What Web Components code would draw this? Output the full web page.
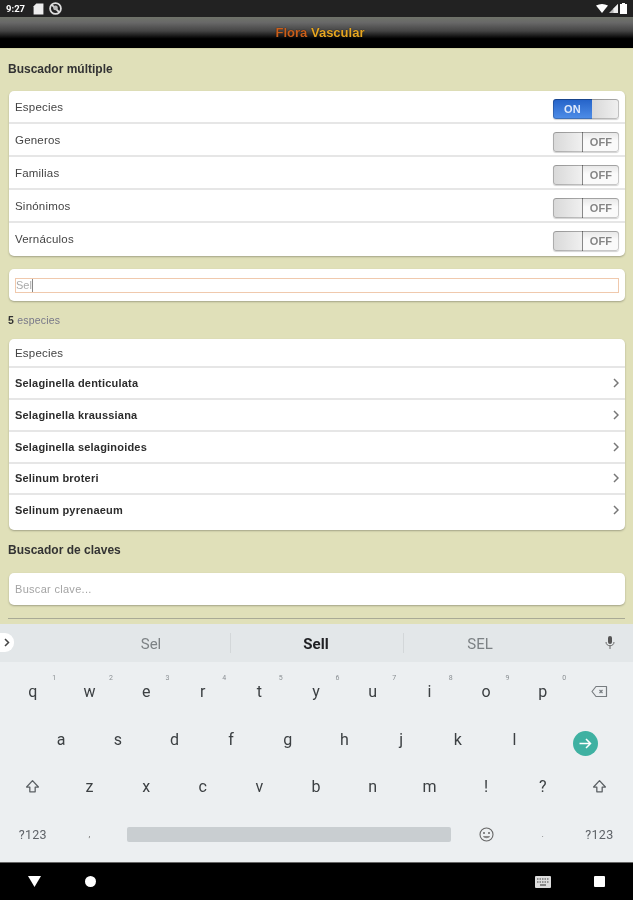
<!DOCTYPE html>
<html lang="es"><head><meta charset="utf-8"><title>Flora Vascular</title>
<style>
html,body{margin:0;padding:0;background:#e0e0b9}
body{width:633px;height:900px;overflow:hidden;font-family:"Liberation Sans",Arial,sans-serif}
</style></head><body>
<fv-app></fv-app>
<script>
function def(name,css,html){
  customElements.define(name,class extends HTMLElement{
    connectedCallback(){
      if(this.shadowRoot)return;
      const r=this.attachShadow({mode:'open'});
      r.innerHTML='<style>'+css+'</style>'+(typeof html==='function'?html(this):html);
    }
  });
}
def('fv-status',`:host{display:flex;align-items:center;height:17px;background:#222;color:#fff;padding:0 6px;box-sizing:border-box;font:bold 9.5px "Roboto",sans-serif}
 .t{width:27px}.sp{flex:1}svg{display:block}`,
 `<span class="t">9:27</span>
 <svg width="11" height="12" viewBox="0 0 10 11" style="margin-right:5px"><path d="M3 .5h6.500v10H.5V3z" fill="#eee"/></svg>
 <svg width="13" height="13" viewBox="0 0 11 11"><circle cx="5.500" cy="5.500" r="4.600" fill="none" stroke="#ddd" stroke-width="1.500"/><path d="M2 2l7 7" stroke="#ddd" stroke-width="1.500"/><circle cx="5.500" cy="5" r="2" fill="#bbb"/></svg>
 <span class="sp"></span>
 <svg width="12" height="9" viewBox="0 0 12 9" style="margin-right:1px"><path d="M0 1.500Q6-1.500 12 1.500L6 9z" fill="#fff"/></svg>
 <svg width="9" height="9" viewBox="0 0 9 9" style="margin-right:2px"><path d="M9 0v9H0z" fill="#bbb"/><path d="M9 0v9H4.500V4.500z" fill="#eee"/></svg>
 <svg width="7" height="11" viewBox="0 0 7 11"><path d="M2 0h3v1h2v10H0V1h2z" fill="#fff"/></svg>`);
def('fv-header',`:host{display:flex;align-items:center;justify-content:center;height:31px;box-sizing:border-box;padding:0 0 1px 7px;background:linear-gradient(#70746a 0,#686868 18%,#444 45%,#000 70%,#000 100%);font:bold 13px "Liberation Sans",sans-serif;text-shadow:0 0 1px #000}
 .a{color:#c95f1c}.b{color:#e6a622}`,`<span><span class="a">Flora</span> <span class="b">Vascular</span></span>`);
def('fv-title',`:host{display:block;font:bold 12px/14px "Liberation Sans",sans-serif;color:#333;padding:0 8px}`,`<slot></slot>`);
def('fv-card',`:host{display:block;margin:0 8px 0 9px;background:#fff;border-radius:5px;box-shadow:0 1px 2px rgba(0,0,0,.28);overflow:hidden}`,`<slot></slot>`);
def('fv-row',`:host{display:flex;align-items:center;justify-content:space-between;box-sizing:border-box;padding:0 6px;height:var(--h,33px);border-bottom:2px solid #e6e6e6;font:11.500px "Liberation Sans",sans-serif;color:#444;letter-spacing:.2px}
 :host([last]){border-bottom:0;padding-bottom:2px}
 :host([bold]){font:bold 11px "Liberation Sans",sans-serif;color:#2c2c2c;letter-spacing:.2px}
 .c{display:block}`,
 e=>`<span><slot></slot></span>`+(e.hasAttribute('bold')?`<svg class="c" width="6" height="10" viewBox="0 0 6 10"><path d="M1 1l4 4-4 4" fill="none" stroke="#777" stroke-width="1.500"/></svg>`:`<slot name="end"></slot>`));
def('fv-toggle',`:host{display:flex;box-sizing:border-box;width:66px;height:20px;margin-top:4px;border-radius:3px;overflow:hidden;position:relative;font:bold 11px/21px "Liberation Sans",sans-serif;box-shadow:0 1px 1px rgba(0,0,0,.18)}
 :host::after{content:"";position:absolute;inset:0;border-radius:3px;box-shadow:inset 0 0 0 1px rgba(0,0,0,.2),inset 0 1px 0 rgba(0,0,0,.12)}
 .on{width:39px;background:linear-gradient(#2462c8,#4f8ee8);color:#dfe9fa;text-align:center}
 .thumb{flex:1;background:linear-gradient(90deg,#d8d8d8,#f0f0f0)}
 .off{width:37px;background:linear-gradient(#e6e6e6,#fafafa 45%);color:#858585;text-align:center;border-left:1px solid #888;box-sizing:border-box}`,
 e=>e.hasAttribute('on')?`<span class="on">ON</span><span class="thumb"></span>`:`<span class="thumb"></span><span class="off">OFF</span>`);
def('fv-search',`:host{display:flex;align-items:center;height:32px;box-sizing:border-box;padding:0 6px;font:11px "Liberation Sans",sans-serif;color:#aaa}
 .i{flex:1;height:15px;box-sizing:border-box;border:1px solid #f0c9ad;display:flex;align-items:center;line-height:13px}
 .caret{width:1px;height:13px;background:#888}`,`<div class="i"><span>Sel</span><span class="caret"></span></div>`);
def('fv-hint',`:host{display:flex;align-items:center;height:32px;padding:0 6px;font:11px "Liberation Sans",sans-serif;color:#a4a4a4;letter-spacing:.3px}`,`<slot></slot>`);
def('fv-count',`:host{display:block;font:10.500px/12px "Liberation Sans",sans-serif;color:#778;letter-spacing:.2px;padding:0 8px}b{color:#333}`,`<b>5</b> especies`);
def('fv-suggest',`:host{display:flex;position:relative;height:38px;background:#e3e7e9;font:15px "Roboto",sans-serif;color:#7d8285;align-items:center;margin-bottom:6px}
 .s{text-align:center;padding-top:2px}
 .a{width:230px;padding-left:72px;box-sizing:border-box}
 .m{width:174px;color:#202124;font-weight:bold;border-left:1px solid #d3d7d9;border-right:1px solid #d3d7d9;box-sizing:border-box;line-height:18px;padding-right:2px}
 .z{width:152px}
 .pill{position:absolute;left:0;top:9px;width:14px;height:19px;border-radius:0 9px 9px 0;background:#fff;display:flex;align-items:center;justify-content:center}
 .mic{position:absolute;left:605px;top:12px;display:block}`,
 `<div class="pill"><svg width="6" height="9" viewBox="0 0 6 9"><path d="M1 1l3.500 3.500L1 8" fill="none" stroke="#444" stroke-width="1.500"/></svg></div>
 <div class="s a">Sel</div><div class="s m">Sell</div><div class="s z">SEL</div>
 <svg class="mic" width="10" height="14" viewBox="0 0 10 14"><rect x="3" y="0" width="4" height="8" rx="2" fill="#555"/><path d="M1 6c0 5 8 5 8 0M5 10v3" fill="none" stroke="#666" stroke-width="1"/></svg>`);
const ic={
 shift:`<svg width="15" height="15" viewBox="0 0 14 14"><path d="M7 1.500L1.500 7.500H4.500V12H9.500V7.500H12.500Z" fill="none" stroke="#5b6064" stroke-width="1.200" stroke-linejoin="round"/></svg>`,
 back:`<svg width="17" height="13" viewBox="0 0 17 13"><path d="M5 1.500H15.500V11.500H5L1 6.500Z" fill="none" stroke="#777c80" stroke-width="1.200" stroke-linejoin="round"/><path d="M8.500 5l3 3M11.500 5l-3 3" stroke="#777c80" stroke-width="1.200"/></svg>`,
 go:`<svg width="25" height="25" viewBox="0 0 25 25"><circle cx="12.500" cy="12.500" r="12.500" fill="#3fb1a2"/><path d="M6.500 12.500h11M13 8l4.500 4.500L13 17" fill="none" stroke="#fff" stroke-width="1.500"/></svg>`,
 emoji:`<svg width="15" height="15" viewBox="0 0 15 15"><circle cx="7.500" cy="7.500" r="6.500" fill="none" stroke="#666" stroke-width="1.100"/><circle cx="5" cy="6" r="1" fill="#666"/><circle cx="10" cy="6" r="1" fill="#666"/><path d="M4 9h7c-.5 3-6.500 3-7 0z" fill="#888"/></svg>`
};
def('fv-key',`:host{display:flex;align-items:center;justify-content:center;position:relative;font:16px "Roboto",sans-serif;color:#3c4043;grid-column:var(--c,auto) / span var(--s,1)}
 :host([sym]){font-size:12.500px;color:#5f6368;letter-spacing:.3px}
 :host([tiny]){font-size:9px;color:#777}
 svg{display:block}
 .n{position:absolute;top:6px;right:5px;font-size:7px;color:#8a8f93}
 .sp{width:324px;height:15px;background:#c9ced1;border-radius:2px;position:absolute;left:9px;top:16px}`,
 e=>{const i=e.getAttribute('icon'),n=e.getAttribute('n');
  if(e.hasAttribute('space'))return `<span class="sp"></span>`;
  return (i?ic[i]:'<slot></slot>')+(n?`<span class="n">${n}</span>`:'');});
def('fv-keyboard',`:host{display:block;background:#eceff1;height:238px;box-sizing:border-box}
 .g{display:grid;grid-template-columns:repeat(22,28.340px);grid-auto-rows:47.500px;padding:0 0 0 4.500px}
 fv-key{--s:2}`,
 ()=>{
  const r1=[['q',1],['w',2],['e',3],['r',4],['t',5],['y',6],['u',7],['i',8],['o',9],['p',0]].map(([k,n])=>`<fv-key n="${n}">${k}</fv-key>`).join('')+`<fv-key icon="back"></fv-key>`;
  const r2=`<fv-key style="--c:2">a</fv-key>`+[...'sdfghjkl'].map(k=>`<fv-key>${k}</fv-key>`).join('')+`<fv-key icon="go" style="--c:20;--s:3;padding-top:8px"></fv-key>`;
  const r3=`<fv-key icon="shift"></fv-key>`+[...'zxcvbnm!?'].map(k=>`<fv-key>${k}</fv-key>`).join('')+`<fv-key icon="shift"></fv-key>`;
  const r4=`<fv-key sym>?123</fv-key><fv-key tiny>,</fv-key><fv-key space style="--c:5;--s:12"></fv-key><fv-key icon="emoji" style="--c:17"></fv-key><fv-key tiny>.</fv-key><fv-key sym>?123</fv-key>`;
  return `<fv-suggest></fv-suggest><div class="g">${r1}${r2}${r3}${r4}</div>`;
 });
def('fv-nav',`:host{display:flex;height:38px;background:#000;border-top:1px solid #666;box-sizing:border-box;align-items:center;padding-left:28px}
 svg{display:block}`,
 `<svg width="13" height="11" viewBox="0 0 13 11" style="margin-right:44px"><path d="M0 0h13L6.500 11z" fill="#fff"/></svg>
  <svg width="11" height="11" viewBox="0 0 11 11" style="margin-right:439px"><circle cx="5.500" cy="5.500" r="5.500" fill="#fff"/></svg>
  <svg width="16" height="12" viewBox="0 0 16 12" style="margin-right:43px"><rect width="16" height="12" rx="1" fill="#ddd"/><path d="M2 3h12M2 6h12" stroke="#777" stroke-width="1.300" stroke-dasharray="1.500 1"/><path d="M5 9h6" stroke="#555" stroke-width="1.300"/></svg>
  <svg width="11" height="11" viewBox="0 0 11 11"><rect width="11" height="11" rx="1" fill="#fff"/></svg>`);
def('fv-app',`:host{display:flex;flex-direction:column;width:633px;height:900px;background:#e0e0b9;filter:blur(.45px)}
 main{flex:1;display:flex;flex-direction:column;min-height:0;background:#e0e0b9;border-top:1px solid #d4d4a8}
 .rule{height:1px;background:#a9aa95;margin:13px 8px 0}`,
 `<fv-status></fv-status><fv-header></fv-header>
 <main>
  <fv-title style="margin-top:13px">Buscador múltiple</fv-title>
  <fv-card style="margin-top:15px">
   <fv-row>Especies<fv-toggle slot="end" on></fv-toggle></fv-row>
   <fv-row>Generos<fv-toggle slot="end"></fv-toggle></fv-row>
   <fv-row>Familias<fv-toggle slot="end"></fv-toggle></fv-row>
   <fv-row>Sinónimos<fv-toggle slot="end"></fv-toggle></fv-row>
   <fv-row last>Vernáculos<fv-toggle slot="end"></fv-toggle></fv-row>
  </fv-card>
  <fv-card style="margin-top:13px"><fv-search></fv-search></fv-card>
  <fv-count style="margin-top:13px"></fv-count>
  <fv-card style="margin-top:13px">
   <fv-row style="--h:29px">Especies</fv-row>
   <fv-row bold style="--h:32px">Selaginella denticulata</fv-row>
   <fv-row bold style="--h:32px">Selaginella kraussiana</fv-row>
   <fv-row bold style="--h:31.600px">Selaginella selaginoides</fv-row>
   <fv-row bold style="--h:31.600px">Selinum broteri</fv-row>
   <fv-row bold last style="--h:34.800px;padding-bottom:6px">Selinum pyrenaeum</fv-row>
  </fv-card>
  <fv-title style="margin-top:13px">Buscador de claves</fv-title>
  <fv-card style="margin-top:16px"><fv-hint>Buscar clave...</fv-hint></fv-card>
  <div class="rule"></div>
 </main>
 <fv-keyboard></fv-keyboard><fv-nav></fv-nav>`);
</script>
</body></html>
